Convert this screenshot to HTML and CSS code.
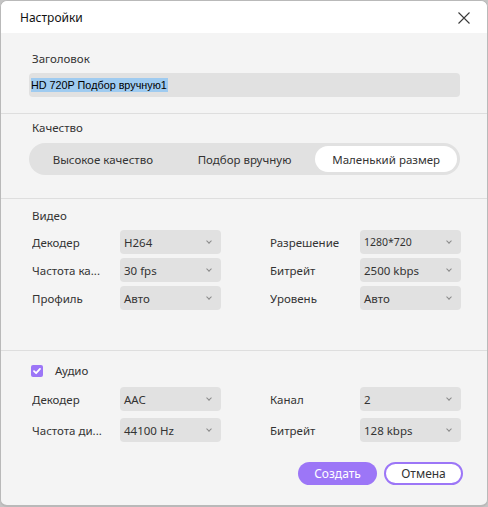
FILE: index.html
```html
<!DOCTYPE html>
<html lang="ru">
<head>
<meta charset="utf-8">
<title>Настройки</title>
<link rel="stylesheet" href="styles.css">
</head>
<body>
<div class="dialog">
  <div class="header">
    <span class="title">Настройки</span>
    <svg class="close" width="12" height="12" viewBox="0 0 12 12"><path d="M0.5 0.5 L11.5 11.5 M11.5 0.5 L0.5 11.5" stroke="#3a3a3a" stroke-width="1.1" fill="none"/></svg>
  </div>

  <div class="section s-title">
    <div class="label">Заголовок</div>
    <div class="input"><span class="sel">HD 720P Подбор вручную1</span></div>
  </div>

  <div class="section s-quality">
    <div class="label">Качество</div>
    <div class="segmented">
      <div class="seg">Высокое качество</div>
      <div class="seg">Подбор вручную</div>
      <div class="seg active">Маленький размер</div>
    </div>
  </div>

  <div class="section s-video">
    <div class="label">Видео</div>
    <div class="grid">
      <div class="lbl">Декодер</div>
      <div class="select"><span>H264</span><i class="chev"></i></div>
      <div></div>
      <div class="lbl">Разрешение</div>
      <div class="select small"><span>1280*720</span><i class="chev"></i></div>

      <div class="lbl">Частота ка...</div>
      <div class="select"><span>30 fps</span><i class="chev"></i></div>
      <div></div>
      <div class="lbl">Битрейт</div>
      <div class="select"><span>2500 kbps</span><i class="chev"></i></div>

      <div class="lbl">Профиль</div>
      <div class="select"><span>Авто</span><i class="chev"></i></div>
      <div></div>
      <div class="lbl">Уровень</div>
      <div class="select"><span>Авто</span><i class="chev"></i></div>
    </div>
  </div>

  <div class="section s-audio">
    <div class="check-row">
      <span class="checkbox"><svg width="12" height="12" viewBox="0 0 12 12"><path d="M3 6.2 L5.1 8.2 L9 3.9" stroke="#fff" stroke-width="1.8" fill="none" stroke-linecap="round" stroke-linejoin="round"/></svg></span>
      <span class="label">Аудио</span>
    </div>
    <div class="grid audio">
      <div class="lbl">Декодер</div>
      <div class="select"><span>AAC</span><i class="chev"></i></div>
      <div></div>
      <div class="lbl">Канал</div>
      <div class="select"><span>2</span><i class="chev"></i></div>

      <div class="lbl">Частота ди...</div>
      <div class="select"><span>44100 Hz</span><i class="chev"></i></div>
      <div></div>
      <div class="lbl">Битрейт</div>
      <div class="select"><span>128 kbps</span><i class="chev"></i></div>
    </div>
    <div class="buttons">
      <button class="btn primary">Создать</button>
      <button class="btn outline">Отмена</button>
    </div>
  </div>
</div>
</body>
</html>
```

FILE: styles.css
```css
html, body {
  margin: 0;
  padding: 0;
  background: #c4c4c4;
}
body {
  width: 488px;
  height: 507px;
  overflow: hidden;
  font-family: "Noto Sans", "Open Sans", sans-serif;
  font-size: 11.5px;
  color: #333;
}
.dialog {
  width: 488px;
  height: 507px;
  box-sizing: border-box;
  border: 1px solid #b9b9b9;
  border-bottom-width: 2px;
  border-radius: 7px;
  background: #f4f4f4;
  overflow: hidden;
  display: flex;
  flex-direction: column;
}
.header {
  height: 32px;
  background: #fff;
  display: flex;
  align-items: center;
  justify-content: space-between;
  padding: 0 17px 0 19px;
  flex: none;
}
.title {
  font-size: 12px;
  color: #111;
  padding-top: 1px;
}
.close { display: block; margin-top: 1px; }

.section {
  padding: 0 27px 0 28px;
  flex: none;
}
.section + .section { border-top: 1px solid #dedede; }
.label {
  line-height: 16px;
  height: 16px;
  padding-left: 3px;
  color: #333;
}
.s-title { padding-top: 18px; padding-bottom: 16px; }
.s-title .label { margin-bottom: 6px; }
.input {
  height: 24px;
  background: #e1e1e1;
  border-radius: 4px;
  display: flex;
  align-items: center;
  padding-left: 2px;
}
.sel {
  background: #9fcbf0;
  color: #000;
  line-height: 14px;
  font-family: "Liberation Sans", Arial, sans-serif;
  font-size: 10.8px;
  padding: 0 1px 0 0;
}

.s-quality { padding-top: 6px; padding-bottom: 23px; }
.s-quality .label { margin-bottom: 7px; }
.segmented {
  height: 32px;
  box-sizing: border-box;
  background: #e1e1e1;
  border-radius: 16px;
  padding: 3px;
  display: grid;
  grid-template-columns: 1fr 1fr 1fr;
}
.seg {
  display: flex;
  align-items: center;
  justify-content: center;
  border-radius: 13px;
  color: #333;
}
.seg.active { background: #fff; }

.s-video { padding-top: 9px; height: 152px; box-sizing: border-box; }
.s-video .label { margin-bottom: 6px; }
.grid {
  display: grid;
  grid-template-columns: 88px 101px 49px 90px 101px;
  grid-auto-rows: 24px;
  row-gap: 4px;
  padding-left: 3px;
}
.grid.audio { row-gap: 7px; }
.lbl {
  display: flex;
  align-items: center;
  white-space: nowrap;
  overflow: hidden;
}
.select {
  background: #e1e1e1;
  border-radius: 4px;
  display: flex;
  align-items: center;
  justify-content: space-between;
  padding: 0 10px 0 4px;
}
.select.small span { font-size: 10.5px; }
.chev {
  width: 3px;
  height: 3px;
  border-right: 1px solid #8a8a8a;
  border-bottom: 1px solid #8a8a8a;
  transform: rotate(45deg);
  margin-top: -3px;
}

.s-audio { padding-top: 12px; flex: 1; }
.check-row {
  display: flex;
  align-items: center;
  height: 16px;
  padding-left: 2px;
  margin-bottom: 8px;
}
.checkbox {
  width: 12px;
  height: 12px;
  border-radius: 2px;
  background: #9c76f7;
  display: flex;
  margin-right: 9px;
}
.check-row .label { padding-left: 3px; }
.buttons {
  display: flex;
  justify-content: flex-end;
  gap: 7px;
  margin-top: 20px;
  margin-right: -3px;
}
.btn {
  width: 79px;
  height: 23px;
  border-radius: 12px;
  font-family: inherit;
  font-size: 12px;
  box-sizing: border-box;
  padding: 0;
  cursor: pointer;
}
.btn.primary {
  background: #9c76f7;
  color: #fff;
  border: none;
}
.btn.outline {
  background: #fff;
  color: #333;
  border: 2px solid #9c76f7;
}
```
